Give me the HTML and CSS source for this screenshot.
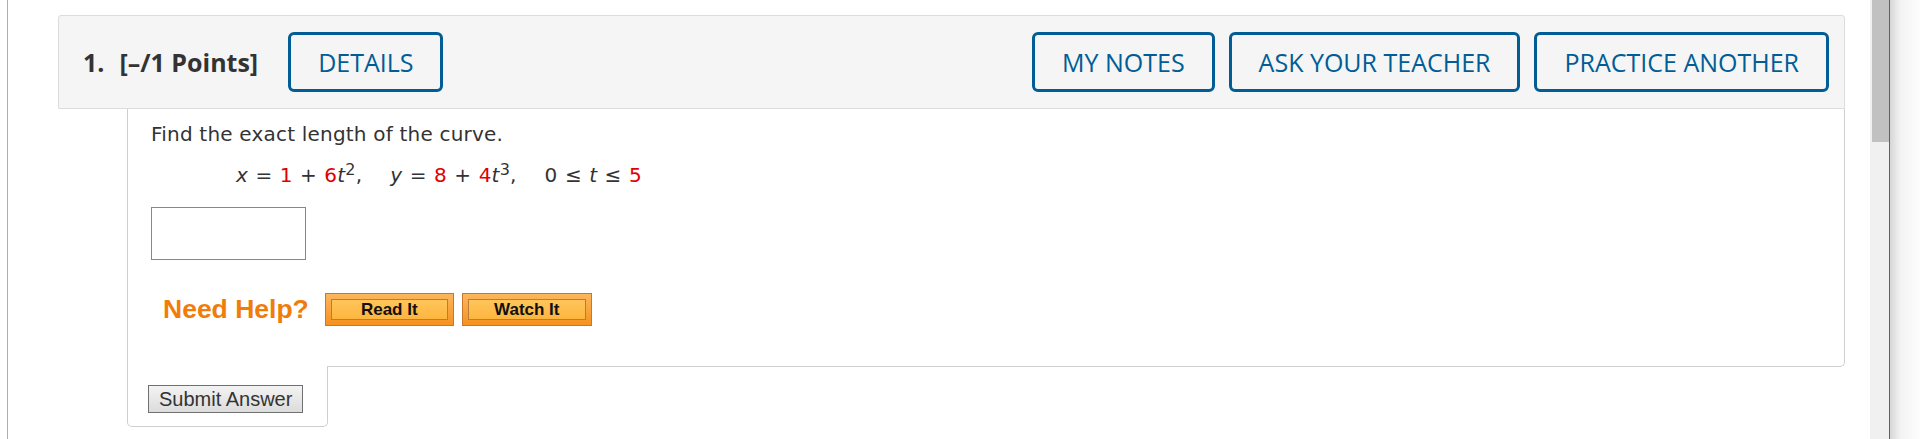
FILE: index.html
```html
<!DOCTYPE html>
<html lang="en">
<head>
<meta charset="utf-8">
<title>Question</title>
<link rel="stylesheet" href="styles.css">
</head>
<body>
<div class="page">
  <div class="question">
    <div class="q-header">
      <span class="q-num">1.</span>
      <span class="q-points">[–/1 Points]</span>
      <button class="q-btn details">DETAILS</button>
      <div class="q-actions">
        <button class="q-btn">MY NOTES</button>
        <button class="q-btn">ASK YOUR TEACHER</button>
        <button class="q-btn">PRACTICE ANOTHER</button>
      </div>
    </div>
    <div class="q-body">
      <p class="prompt">Find the exact length of the curve.</p>
      <p class="math"><i>x</i> = <span class="r">1</span> + <span class="r">6</span><i>t</i><sup>2</sup>,<span class="gap"></span><i>y</i> = <span class="r">8</span> + <span class="r">4</span><i>t</i><sup>3</sup>,<span class="gap"></span>0 ≤ <i>t</i> ≤ <span class="r">5</span></p>
      <div class="answer"></div>
      <div class="help">
        <span class="help-label">Need Help?</span>
        <a class="help-btn read"><span>Read It</span></a>
        <a class="help-btn watch"><span>Watch It</span></a>
      </div>
    </div>
    <div class="q-submit"><button class="submit">Submit Answer</button></div>
  </div>
</div>
<div class="scrollbar"><div class="thumb"></div></div>
<div class="divider"></div>
<div class="shadow"></div>
</body>
</html>
```
FILE: styles.css
```css
* { box-sizing: border-box; }
html, body { margin: 0; height: 100%; }
body { display: flex; background: #fff; overflow: hidden; }

.page { flex: 1; min-width: 0; margin-left: 7px; border-left: 1px solid #adadad; }
.question { margin: 15px 25px 0 50px; }

.q-header {
  display: flex; align-items: center; height: 94px;
  padding: 0 15px 0 24px;
  background: #f5f5f5; border: 1px solid #dcdcdc; border-radius: 3px 3px 0 0;
  font-family: "Open Sans", sans-serif; color: #333;
}
.q-num, .q-points { font-size: 25px; font-weight: 700; }
.q-points { margin-left: 15px; }
.q-btn {
  height: 60px; padding: 0 27px; margin: 0;
  border: 3px solid #005d96; border-radius: 6px; background: transparent;
  color: #005d96; font: 25px "Open Sans", sans-serif;
}
.details { margin-left: 30px; }
.q-actions { margin-left: auto; display: flex; gap: 14px; }

.q-body {
  margin-left: 69px;
  border: 1px solid #cfcfcf; border-top: 0; border-bottom-right-radius: 5px;
  padding: 13px 23px 40px 23px;
  font-family: "DejaVu Sans", Verdana, sans-serif; font-size: 20px; color: #333;
}
.prompt { margin: 0; line-height: 24px; letter-spacing: 0.2px; }
.math { margin: 17px 0 0; padding-left: 85px; line-height: 24px; white-space: nowrap; letter-spacing: 0.2px; word-spacing: 0.8px; }
.math i { font-style: italic; }
.r { color: #e00000; }
.math sup { font-size: 16px; line-height: 0; vertical-align: 7px; }
.gap { display: inline-block; width: 28px; }
.answer { width: 155px; height: 53px; border: 1px solid #888; margin-top: 20px; }

.help { display: flex; align-items: center; height: 33px; margin-top: 33px; padding-left: 12px; }
.help-label { font: bold 26.5px "Liberation Sans", Arial, sans-serif; color: #f07d0a; margin-right: 16px; }
.help-btn {
  display: block; width: 129px; height: 33px; padding: 5px;
  border: 1px solid #c8772c; background: linear-gradient(#fcb65e, #f5921f);
  margin-right: 8px;
}
.help-btn.watch { width: 130px; }
.help-btn span {
  display: block; height: 21px;
  border: 1px solid #b97c3a; background: linear-gradient(#ffc55a, #fdb540);
  font: bold 17px/19px "Liberation Sans", Arial, sans-serif; color: #111; text-align: center;
}

.q-submit {
  margin-left: 69px; margin-top: -1px; width: 201px;
  background: #fff; border: 1px solid #cfcfcf; border-top: 0; border-radius: 0 0 5px 5px;
  padding: 19px 0 13px 20px;
}
.submit {
  height: 28px; padding: 0 10px; margin: 0;
  border: 1px solid #707070; border-radius: 0;
  background: linear-gradient(#f3f3f3, #dcdcdc);
  font: 20px "Liberation Sans", Arial, sans-serif; color: #333;
}

.scrollbar { width: 19px; flex-shrink: 0; background: #f0f0f0; padding-left: 2px; }
.thumb { height: 142px; background: #c1c1c1; }
.divider { width: 1px; flex-shrink: 0; background: #606060; }
.shadow { width: 30px; flex-shrink: 0; background: linear-gradient(to right, #d6d6d6, #f3f3f3 35%, #fdfdfd); }
```
